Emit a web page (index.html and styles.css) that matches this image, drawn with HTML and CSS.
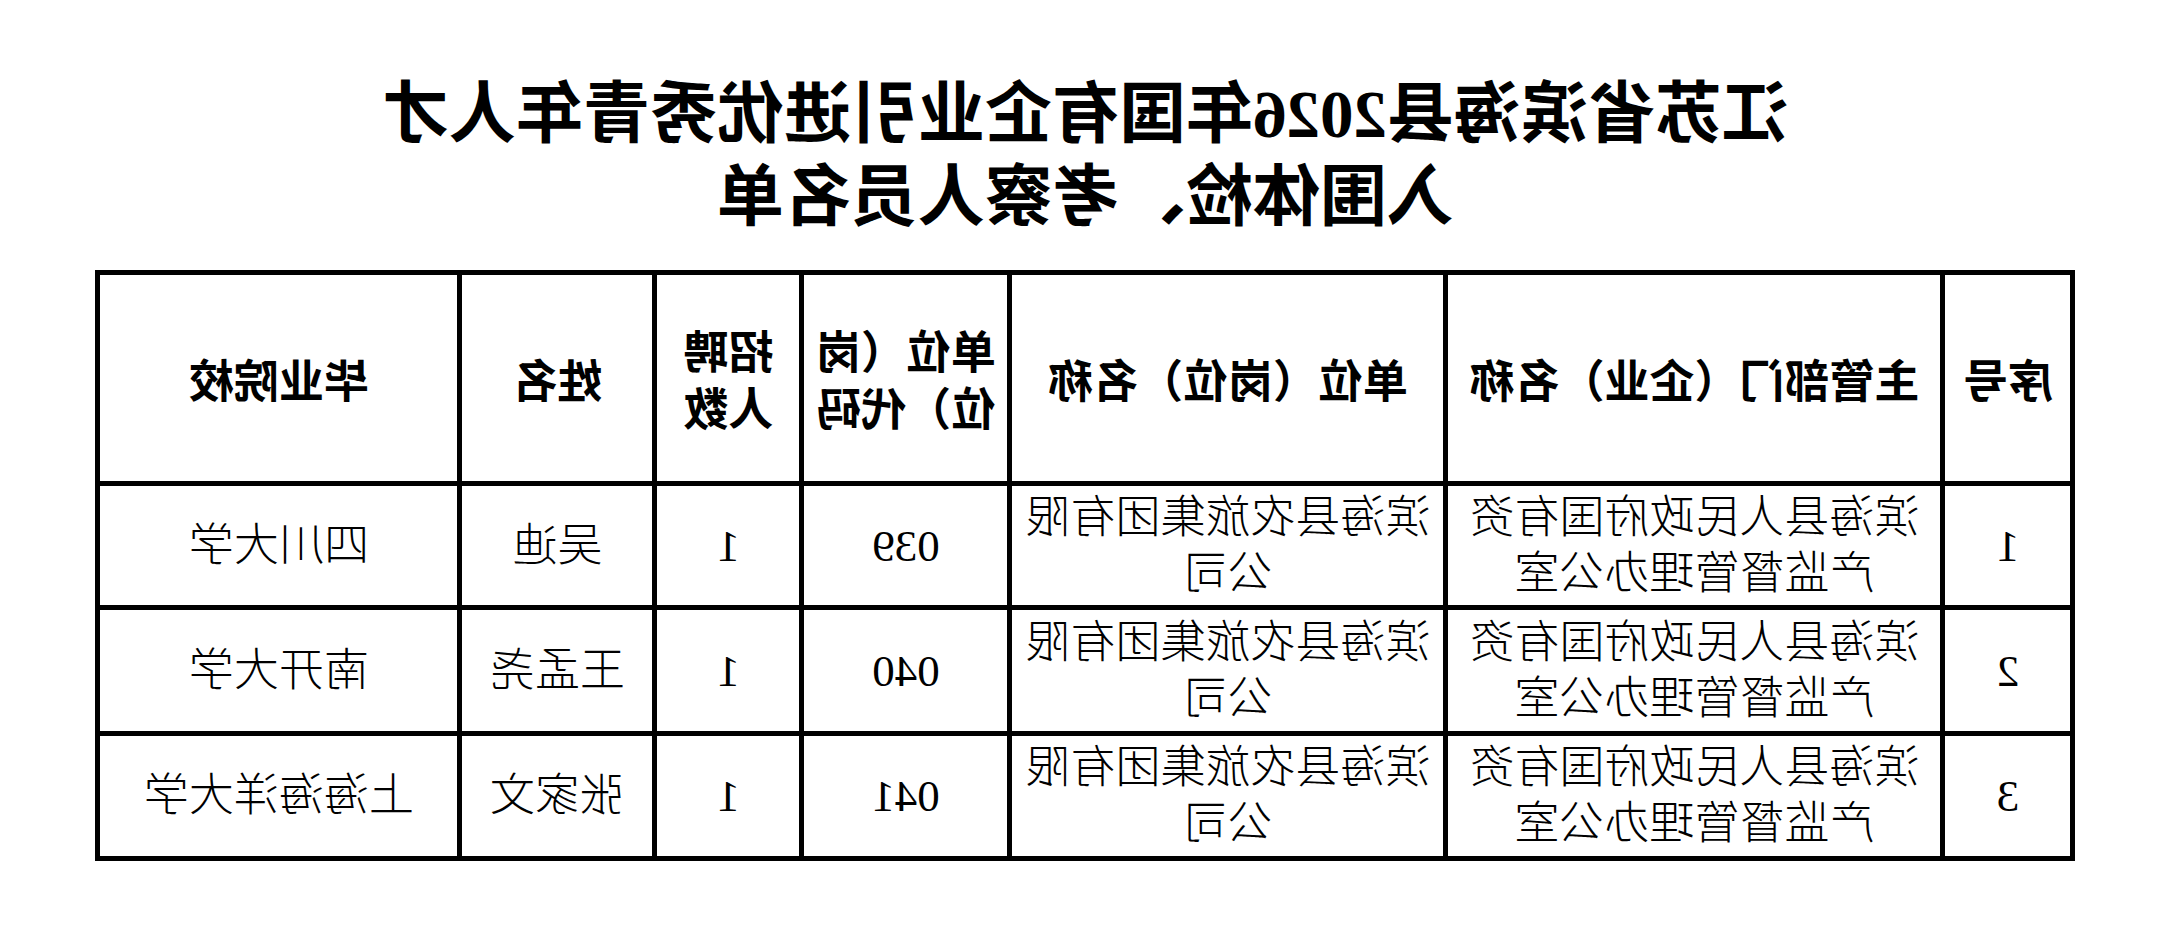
FILE: index.html
```html
<!DOCTYPE html>
<html lang="zh-CN">
<head>
<meta charset="utf-8">
<title>入围体检、考察人员名单</title>
<link rel="stylesheet" href="styles.css">
</head>
<body>
<div class="page">
  <h1 class="title">
    <span class="title-line">江苏省滨海县2026年国有企业引进优秀青年人才</span>
    <span class="title-line">入围体检、考察人员名单</span>
  </h1>
  <div class="sheet">
    <div class="cell head">序号</div>
    <div class="cell head">主管部门（企业）名称</div>
    <div class="cell head">单位（岗位）名称</div>
    <div class="cell head">单位（岗位）代码</div>
    <div class="cell head">招聘人数</div>
    <div class="cell head">姓名</div>
    <div class="cell head">毕业院校</div>

    <div class="cell">1</div>
    <div class="cell">滨海县人民政府国有资产监督管理办公室</div>
    <div class="cell">滨海县农旅集团有限公司</div>
    <div class="cell">039</div>
    <div class="cell">1</div>
    <div class="cell">吴迪</div>
    <div class="cell">四川大学</div>

    <div class="cell">2</div>
    <div class="cell">滨海县人民政府国有资产监督管理办公室</div>
    <div class="cell">滨海县农旅集团有限公司</div>
    <div class="cell">040</div>
    <div class="cell">1</div>
    <div class="cell">王孟尧</div>
    <div class="cell">南开大学</div>

    <div class="cell">3</div>
    <div class="cell">滨海县人民政府国有资产监督管理办公室</div>
    <div class="cell">滨海县农旅集团有限公司</div>
    <div class="cell">041</div>
    <div class="cell">1</div>
    <div class="cell">张家文</div>
    <div class="cell">上海海洋大学</div>
  </div>
</div>
</body>
</html>
```
FILE: styles.css
```css
html, body {
  margin: 0;
  padding: 0;
  background: #fff;
  color: #000;
}
body {
  overflow: hidden;
}
.page {
  width: 2171px;
  height: 938px;
  transform: scaleX(-1);
  display: flex;
  flex-direction: column;
  align-items: center;
}
.title {
  margin: 73px 0 0;
  font-family: "Liberation Serif", "Noto Sans CJK SC", serif;
  font-weight: 700;
  font-size: 67px;
  line-height: 83px;
  text-align: center;
}
.title-line {
  display: block;
}
.sheet {
  margin-top: 31px;
  display: grid;
  grid-template-columns: 125px 492px 431px 203px 142px 190px 357px;
  grid-template-rows: 206px 119px 121px 120px;
  gap: 5px;
  padding: 5px;
  background: #000;
}
.cell {
  background: #fff;
  display: flex;
  align-items: center;
  justify-content: center;
  text-align: center;
  padding: 0 6px;
  font-family: "Liberation Serif", "Noto Sans CJK SC", serif;
  font-weight: 300;
  font-size: 45px;
  line-height: 56px;
}
.head {
  font-family: "Noto Sans CJK SC", sans-serif;
  font-weight: 700;
  line-height: 57px;
}
```
